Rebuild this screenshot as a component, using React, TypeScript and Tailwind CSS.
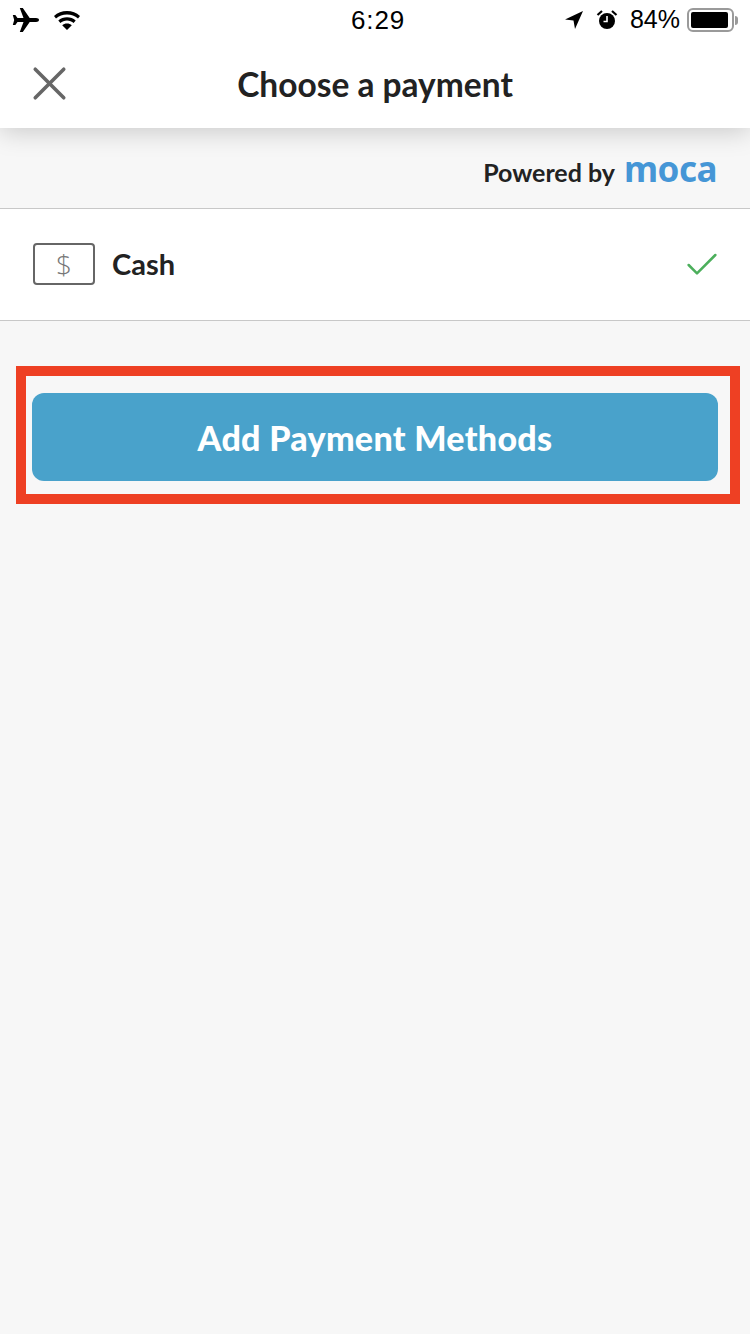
import { X, Check } from "lucide-react";

function Plane() {
  return (
    <svg width="28" height="26" viewBox="0 0 28 26" className="fill-black">
      <path d="M27 13c0-1.200-1.300-1.900-3-1.900h-6.300L10.800 1H7.800l3.700 10.100H5.500L3.300 8H.8l1.400 5-1.400 5h2.500l2.200-3.100h6l-3.700 10.100h3l6.900-10.100H24c1.700 0 3-.7 3-1.900z" />
    </svg>
  );
}

function Wifi() {
  return (
    <svg width="30" height="22" viewBox="0 0 28 22" className="fill-black">
      <path d="M14 2C9 2 4.500 3.800 1 7l2 2.500C6 6.900 9.800 5.400 14 5.400s8 1.500 11 4.100L27 7c-3.500-3.200-8-5-13-5z" />
      <path d="M14 8.300c-3.300 0-6.300 1.200-8.700 3.200l2.100 2.500c1.800-1.500 4.100-2.400 6.600-2.400s4.800.9 6.600 2.400l2.100-2.500c-2.400-2-5.400-3.200-8.700-3.200z" />
      <path d="M14 14.500c-1.900 0-3.500.6-4.800 1.700L14 21l4.800-4.800c-1.300-1.100-2.900-1.700-4.800-1.700z" />
    </svg>
  );
}

function Arrow() {
  return (
    <svg width="20" height="20" viewBox="0 0 20 20" className="fill-black">
      <path d="M19 1 1 9.500l8.500.9L11 19z" />
    </svg>
  );
}

function Alarm() {
  return (
    <svg width="22" height="22" viewBox="0 0 22 22">
      <circle cx="11" cy="12" r="8" fill="#000" />
      <path d="M11 7v5.500H7.500" fill="none" stroke="#fff" strokeWidth="1.600" />
      <path d="M1.500 6 6 2M20.500 6 16 2" stroke="#000" strokeWidth="2.200" />
    </svg>
  );
}

function StatusBar() {
  return (
    <div className="flex h-10 items-center justify-between bg-white pr-[12px] pl-[12px] font-['Liberation_Sans',sans-serif] text-black">
      <div className="flex w-[200px] items-center gap-[12px]">
        <Plane />
        <Wifi />
      </div>
      <span className="ml-[6px] text-[26px] tracking-[0.8px]">6:29</span>
      <div className="flex w-[200px] items-center justify-end">
        <Arrow />
        <span className="ml-[12px]">
          <Alarm />
        </span>
        <span className="ml-[12px] text-[25px]">84%</span>
        <div className="ml-[7px] flex h-[24px] w-[47px] items-center rounded-[6px] border-2 border-[#9a9a9a] p-[2px]">
          <div className="h-full w-[37px] rounded-[2px] bg-black" />
        </div>
        <div className="ml-[1px] h-[9px] w-[3px] rounded-r-full bg-[#9a9a9a]" />
      </div>
    </div>
  );
}

export default function App() {
  return (
    <div className="flex min-h-[1334px] flex-col bg-[#f7f7f7] font-['Lato','Noto_Sans',sans-serif]">
      <div className="relative z-10 bg-white shadow-[0_4px_24px_rgba(0,0,0,0.18)]">
        <StatusBar />
        <header className="relative flex h-[88px] items-center justify-center">
          <X className="absolute top-[15px] left-[21px] text-[#666666]" size={57} strokeWidth={1.5} />
          <h1 className="text-[33.5px] leading-[40px] font-bold text-[#222222]">Choose a payment</h1>
        </header>
      </div>

      <div className="flex h-[81px] items-center justify-end gap-[9px] border-b border-[#c8c8c8] pr-[33px]">
        <span className="mt-[10px] text-[25px] font-bold text-[#222222]">Powered by</span>
        <span className="font-['Noto_Sans',sans-serif] text-[35px] leading-none font-bold tracking-[-0.5px] text-[#4596d6]">
          moca
        </span>
      </div>

      <div className="flex h-[112px] items-center border-b border-[#c8c8c8] bg-white pr-[28px] pb-[2px] pl-[33px]">
        <div className="flex h-[42px] w-[62px] items-center justify-center rounded-[4px] border-2 border-[#666666] font-['Open_Sans',sans-serif] text-[28px] font-light text-[#777777]">
          $
        </div>
        <span className="ml-[17px] text-[29px] font-bold text-[#222222]">Cash</span>
        <Check className="mt-[2px] ml-auto text-[#4caf5c]" size={40} strokeWidth={1.5} />
      </div>

      <div className="mt-[45px] mr-[10px] ml-[16px] border-[10px] border-[#ee4023] pt-[17px] pr-[12px] pb-[13px] pl-[6px]">
        <button className="flex h-[88px] w-full items-center justify-center rounded-[12px] bg-[#49a2cb] text-[34px] font-black tracking-[0.3px] text-white">
          Add Payment Methods
        </button>
      </div>
    </div>
  );
}
